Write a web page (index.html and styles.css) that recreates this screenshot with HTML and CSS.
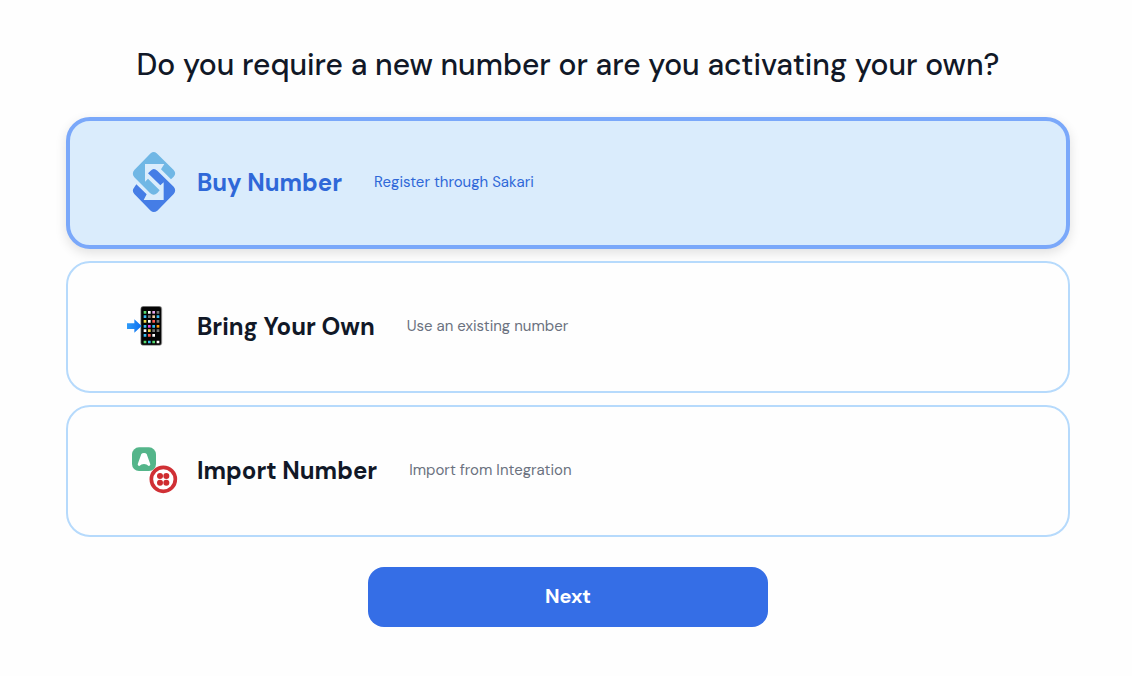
FILE: index.html
```html
<!DOCTYPE html>
<html lang="en">
<head>
<meta charset="utf-8">
<meta name="viewport" content="width=device-width, initial-scale=1">
<title>Choose a number</title>
<link rel="stylesheet" href="styles.css">
</head>
<body>
<form class="page">
  <h1 class="heading" id="question">Do you require a new number or are you activating your own?</h1>
  <div class="options" role="radiogroup" aria-labelledby="question">
    <label class="option">
      <input class="option-input" type="radio" name="source" value="buy" checked>
      <svg class="logo" viewBox="18 27 168 204" aria-hidden="true">
        <path fill="#70b7e5" d="M92 40Q101 32 110 40L161 90Q170 100 161 110L153 118L123 88L133 72H75V125L84 116L119 151L112 159Q101 170 90 159L43 112Q34 101 43 90Z"/>
        <path fill="#457de6" d="M112 212Q101 220 92 212L43 162Q34 152 43 142L49 133L80 163L71 180H131V127L121 136L84 100L92 92Q101 82 112 92L161 140Q170 151 161 162Z"/>
      </svg>
      <span class="option-title">Buy Number</span>
      <span class="option-note">Register through Sakari</span>
    </label>
    <label class="option">
      <input class="option-input" type="radio" name="source" value="own">
      <svg class="icon" viewBox="18 9 168 168" aria-hidden="true">
        <defs>
          <linearGradient id="arrow" x2="1"><stop stop-color="#2f9bf8"/><stop offset="1" stop-color="#0d6ff0"/></linearGradient>
        </defs>
        <rect x="62" y="30" width="65" height="119" rx="9" fill="#c9c9c9"/>
        <rect x="62" y="31" width="63" height="117" rx="8" fill="#555"/>
        <rect x="64" y="33" width="59" height="113" rx="6" fill="#050505"/>
        <path d="M21 82H43V70L65 90L43 110V99H21Z" fill="url(#arrow)"/>
        <path fill="#58df71" d="M71 45h8v8h-8zM71 134h8v8h-8zM97 134h8v8h-8z"/>
        <path fill="#fff" d="M84 45h8v8h-8zM84 72h8v8h-8zM71 100h8v8h-8zM97 114h8v8h-8zM110 134h8v8h-8z"/>
        <path fill="#e6a6ee" d="M97 45h8v8h-8z"/>
        <path fill="#777" d="M110 45h8v8h-8zM84 58h8v8h-8zM110 72h8v8h-8zM97 100h8v8h-8zM110 100h8v8h-8z"/>
        <path fill="#36bdf5" d="M71 58h8v8h-8zM110 58h8v8h-8zM71 87h8v8h-8zM97 87h8v8h-8zM71 114h8v8h-8zM84 134h8v8h-8z"/>
        <path fill="#f3cfa4" d="M97 58h8v8h-8z"/>
        <path fill="#f4dd48" d="M71 72h8v8h-8zM84 100h8v8h-8z"/>
        <path fill="#ff5b52" d="M97 72h8v8h-8zM84 114h8v8h-8z"/>
        <path fill="#ef4de5" d="M84 87h8v8h-8z"/>
        <path fill="#ff9d16" d="M110 87h8v8h-8z"/>
      </svg>
      <span class="option-title">Bring Your Own</span>
      <span class="option-note">Use an existing number</span>
    </label>
    <label class="option">
      <input class="option-input" type="radio" name="source" value="import">
      <svg class="icon" viewBox="18 21 168 168" aria-hidden="true">
        <rect x="36" y="34" width="72" height="71" rx="21" fill="#54b58a"/>
        <path fill="#fff" d="M64 54Q66 51 72 51Q78 51 80 54L91 85Q91 90 86 90Q80 84 72 84Q64 84 58 90Q53 90 53 85Z"/>
        <circle cx="130" cy="130" r="36" fill="#fff" stroke="#d03035" stroke-width="11"/>
        <g fill="#cf2c30"><circle cx="120" cy="120" r="9"/><circle cx="139" cy="120" r="9"/><circle cx="120" cy="140" r="9"/><circle cx="139" cy="140" r="9"/></g>
      </svg>
      <span class="option-title">Import Number</span>
      <span class="option-note">Import from Integration</span>
    </label>
  </div>
  <button class="next" type="submit">Next</button>
</form>
</body>
</html>
```
FILE: styles.css
```css
* {
  box-sizing: border-box;
}

body {
  margin: 0;
  background: #fefefe;
  color: #111827;
  font-family: "DM Sans", Inter, sans-serif;
}

.page {
  display: flex;
  flex-direction: column;
  align-items: center;
  padding: 45px 62px 48px 66px;
}

.heading {
  margin: 0 0 32px;
  font-size: 30px;
  font-weight: 500;
  line-height: 40px;
  text-align: center;
}

.options {
  display: flex;
  flex-direction: column;
  gap: 12px;
  width: 100%;
}

.option {
  position: relative;
  display: flex;
  align-items: center;
  min-height: 132px;
  padding: 24px 58px;
  border: 2px solid #b6dafc;
  border-radius: 24px;
  cursor: pointer;
}

.option:has(.option-input:checked) {
  padding: 24px 56px;
  border: 4px solid #7aa8fa;
  background: #daecfc;
  color: #2f68d8;
  box-shadow: 0 4px 12px rgba(0, 0, 0, 0.12);
}

.option-input {
  position: absolute;
  opacity: 0;
}

.logo,
.icon {
  flex: none;
  width: 56px;
  height: 56px;
  margin-right: 15px;
}

.logo {
  height: 68px;
}

.option-title {
  margin-right: 32px;
  font-size: 24px;
  font-weight: 700;
  line-height: 32px;
}

.option-note {
  padding-bottom: 2px;
  color: #6b7280;
  font-size: 15px;
  font-weight: 400;
  line-height: 24px;
}

.option-input:checked ~ .option-note {
  color: inherit;
}

.next {
  width: 400px;
  max-width: 100%;
  height: 60px;
  margin-top: 30px;
  padding: 0 0 2px;
  border: 0;
  border-radius: 16px;
  background: #356ee6;
  color: #fff;
  font: inherit;
  font-size: 20px;
  font-weight: 700;
  cursor: pointer;
}
```
